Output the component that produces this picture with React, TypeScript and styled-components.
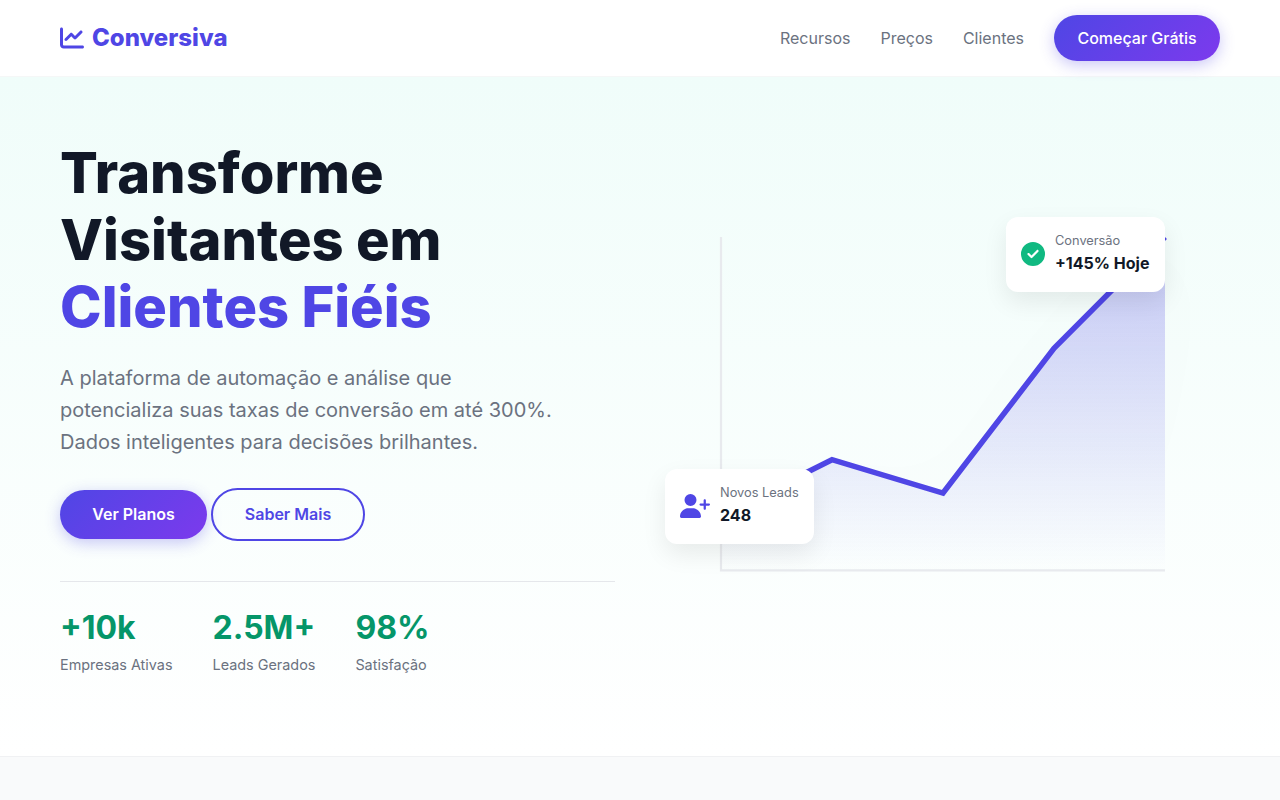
import React from 'react'
import styled, { createGlobalStyle } from 'styled-components'
import { FaChartLine, FaCircleCheck, FaUserPlus } from 'react-icons/fa6'

const GlobalStyle = createGlobalStyle`
  * { box-sizing: border-box; }
  body {
    margin: 0;
    font-family: 'Inter', 'Liberation Sans', sans-serif;
    background: #ffffff;
    color: #111827;
  }
`
const Page = styled.div`
  height: 800px;
  overflow: hidden;
  background: #f9fafb;
`
const Header = styled.header`
  height: 77px;
  padding: 0 60px 1px;
  display: flex;
  align-items: center;
  justify-content: space-between;
  background: #ffffff;
  border-bottom: 1px solid #f5f7f7;
`
const Logo = styled.div`
  display: flex;
  align-items: center;
  gap: 8px;
  font-size: 24px;
  font-weight: 800;
  color: #4f46e5;
`
const Nav = styled.nav`
  display: flex;
  align-items: center;
  gap: 30px;
`
const NavLink = styled.a`
  font-size: 16px;
  font-weight: 400;
  color: #6b7280;
`
const CtaButton = styled.button`
  height: 46px;
  width: 166px;
  padding: 0;
  border: none;
  border-radius: 50px;
  font-family: inherit;
  font-size: 16px;
  font-weight: 500;
  color: #ffffff;
  background: linear-gradient(135deg, #4f46e5, #7c3aed);
  box-shadow: 0 4px 15px rgba(79, 70, 229, 0.3);
`
const Hero = styled.section`
  height: 680px;
  padding: 63px 60px 0;
  display: grid;
  grid-template-columns: 1fr 1fr;
  column-gap: 50px;
  background: linear-gradient(180deg, #f0fdfa 0%, #ffffff 100%);
  border-bottom: 1px solid #f0f1f3;
`
const Copy = styled.div`
  display: flex;
  flex-direction: column;
`
const Title = styled.h1`
  margin: 0 0 20px;
  font-size: 56px;
  line-height: 67.2px;
  font-weight: 800;
  color: #111827;
`
const TitleAccent = styled.span`
  color: #4f46e5;
`
const Lead = styled.p`
  margin: 0 0 30px;
  font-size: 20px;
  line-height: 32px;
  color: #6b7280;
`
const Actions = styled.div`
  display: flex;
  align-items: center;
  gap: 4px;
`
const PrimaryButton = styled.button`
  height: 49px;
  width: 147px;
  border: none;
  border-radius: 50px;
  font-family: inherit;
  font-size: 16px;
  font-weight: 600;
  color: #ffffff;
  background: linear-gradient(135deg, #4f46e5, #7c3aed);
  box-shadow: 0 4px 15px rgba(79, 70, 229, 0.3);
`
const SecondaryButton = styled.button`
  height: 53px;
  width: 154px;
  border: 2px solid #4f46e5;
  border-radius: 50px;
  font-family: inherit;
  font-size: 16px;
  font-weight: 600;
  color: #4f46e5;
  background: transparent;
`
const Stats = styled.div`
  display: flex;
  gap: 40px;
  margin-top: 40px;
  padding-top: 24px;
  border-top: 1px solid #e5e7eb;
`
const Stat = styled.div`
  display: flex;
  flex-direction: column;
`
const StatValue = styled.div`
  font-size: 32px;
  line-height: 44px;
  font-weight: 700;
  color: #059669;
`
const StatLabel = styled.div`
  margin-top: 4px;
  font-size: 14.4px;
  line-height: 22px;
  color: #6b7280;
`
const Visual = styled.div`
  position: relative;
  display: flex;
  justify-content: center;
  padding-top: 97px;
`
const ChartFrame = styled.div`
  width: 80%;
  height: 334px;
  filter: drop-shadow(0 20px 40px rgba(0, 0, 0, 0.03));
`
const FloatCard = styled.div<{ $top: number; $left: number; $width: number }>`
  position: absolute;
  top: ${p => p.$top}px;
  left: ${p => p.$left}px;
  width: ${p => p.$width}px;
  height: 75px;
  padding: 0 15px;
  display: flex;
  align-items: center;
  gap: 10px;
  background: #ffffff;
  border-radius: 12px;
  box-shadow: 0 10px 25px rgba(0, 0, 0, 0.08);
`
const CardIcon = styled.span<{ $color: string; $width: number }>`
  display: flex;
  margin-bottom: 2px;
  color: ${p => p.$color};
  svg {
    width: ${p => p.$width}px;
    height: 24px;
  }
`
const CardText = styled.div`
  display: flex;
  flex-direction: column;
  padding-bottom: 3px;
`
const CardLabel = styled.span`
  font-size: 12.8px;
  line-height: 18px;
  color: #6b7280;
`
const CardValue = styled.span`
  margin-top: 1px;
  font-size: 16px;
  line-height: 24px;
  font-weight: 700;
  color: #111827;
`

const App: React.FC = () => {
  return (
    <Page>
      <GlobalStyle />
      <Header>
        <Logo>
          <FaChartLine size={24} />
          Conversiva
        </Logo>
        <Nav>
          <NavLink>Recursos</NavLink>
          <NavLink>Preços</NavLink>
          <NavLink>Clientes</NavLink>
          <CtaButton>Começar Grátis</CtaButton>
        </Nav>
      </Header>
      <Hero>
        <Copy>
          <Title>
            Transforme<br />
            Visitantes em<br />
            <TitleAccent>Clientes Fiéis</TitleAccent>
          </Title>
          <Lead>
            A plataforma de automação e análise que<br />
            potencializa suas taxas de conversão em até 300%.<br />
            Dados inteligentes para decisões brilhantes.
          </Lead>
          <Actions>
            <PrimaryButton>Ver Planos</PrimaryButton>
            <SecondaryButton>Saber Mais</SecondaryButton>
          </Actions>
          <Stats>
            <Stat>
              <StatValue>+10k</StatValue>
              <StatLabel>Empresas Ativas</StatLabel>
            </Stat>
            <Stat>
              <StatValue>2.5M+</StatValue>
              <StatLabel>Leads Gerados</StatLabel>
            </Stat>
            <Stat>
              <StatValue>98%</StatValue>
              <StatLabel>Satisfação</StatLabel>
            </Stat>
          </Stats>
        </Copy>
        <Visual>
          <ChartFrame>
            <svg width="100%" height="100%" viewBox="0 0 400 300" preserveAspectRatio="none" style={{ display: 'block', overflow: 'visible' }}>
              <defs>
                <linearGradient id="area" x1="0" y1="0" x2="0" y2="1">
                  <stop offset="0%" stopColor="#4f46e5" stopOpacity="0.3" />
                  <stop offset="100%" stopColor="#4f46e5" stopOpacity="0" />
                </linearGradient>
              </defs>
              <path d="M0 250L100 200L200 230L300 100L400 0V300H0Z" fill="url(#area)" />
              <path d="M0 0V299.5H400" fill="none" stroke="#e8eaee" strokeWidth="2" />
              <path d="M0 250L100 200L200 230L300 100L400 0" fill="none" stroke="#4f46e5" strokeWidth="5" />
            </svg>
          </ChartFrame>
          <FloatCard $top={77} $left={341} $width={159}>
            <CardIcon $color="#10b981" $width={24}><FaCircleCheck /></CardIcon>
            <CardText>
              <CardLabel>Conversão</CardLabel>
              <CardValue>+145% Hoje</CardValue>
            </CardText>
          </FloatCard>
          <FloatCard $top={329} $left={0} $width={149}>
            <CardIcon $color="#4f46e5" $width={30}><FaUserPlus /></CardIcon>
            <CardText>
              <CardLabel>Novos Leads</CardLabel>
              <CardValue>248</CardValue>
            </CardText>
          </FloatCard>
        </Visual>
      </Hero>
    </Page>
  )
}

export default App
